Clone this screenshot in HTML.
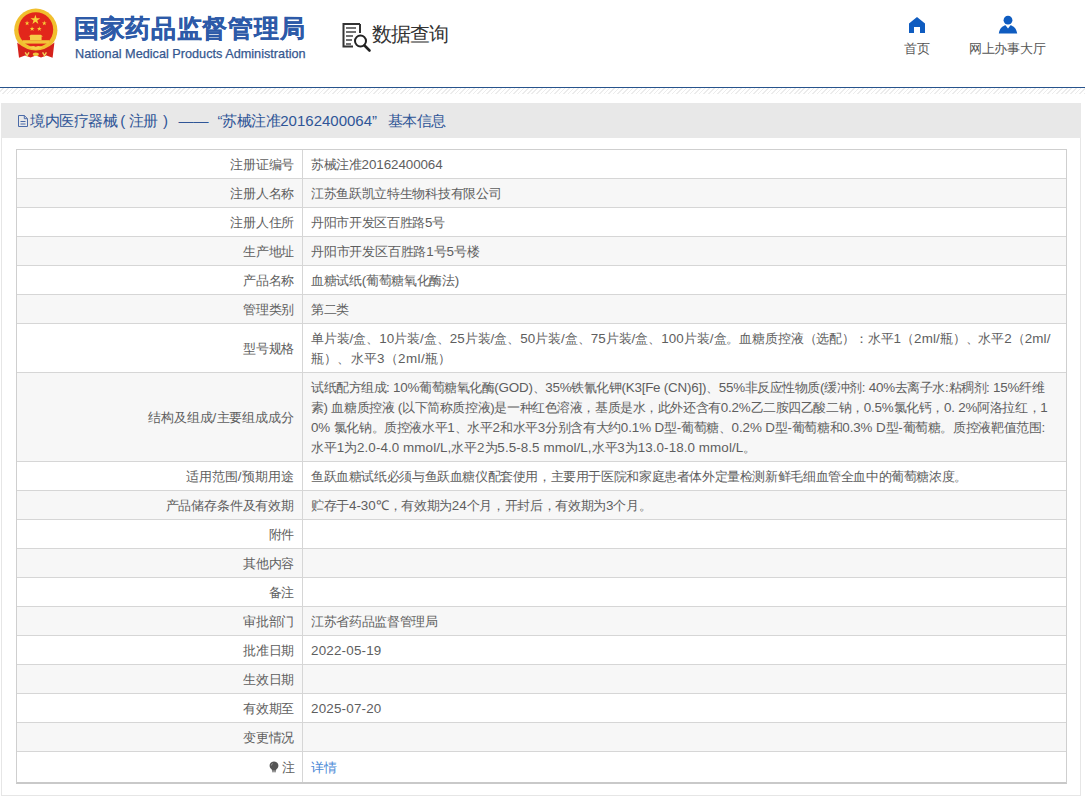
<!DOCTYPE html>
<html><head><meta charset="utf-8">
<style>
html,body{margin:0;padding:0;}
body{width:1085px;height:800px;overflow:hidden;background:#fff;position:relative;font-family:"Liberation Sans",sans-serif;}
.abs{position:absolute;}
#emblem{left:0;top:0;}
#t1{left:74px;top:10px;font-size:25px;font-weight:bold;color:#2d5aa8;-webkit-text-stroke:0.2px #2d5aa8;line-height:36px;white-space:nowrap;letter-spacing:0.7px;}
#t2{left:75px;top:45.5px;font-size:12.7px;color:#35578f;line-height:17px;white-space:nowrap;-webkit-text-stroke:0.25px #35578f;}
#sq{left:342px;top:23px;}
#sqt{left:372px;top:19px;font-size:20px;font-weight:500;color:#333;line-height:30px;white-space:nowrap;letter-spacing:-1px;}
.nav{font-size:13px;color:#555;line-height:16px;white-space:nowrap;}
#n1{left:904px;top:41px;letter-spacing:-0.3px;}
#n2{left:969px;top:41px;letter-spacing:-0.3px;}
#blue{left:0;top:87px;width:1085px;height:1px;background:#27538c;}
#hatch{left:0;top:88px;width:1085px;height:6px;background:repeating-linear-gradient(135deg,#fff 0px,#fff 2.1px,#ececec 2.1px,#ececec 3.2px);}
#panel{left:1px;top:103px;width:1078px;height:691px;border:1px solid #e6e6e6;background:#fff;}
#ph{left:1px;top:103px;width:1080px;height:35px;background:#e8e8e8;}
#pht{left:30px;top:103px;height:35px;line-height:35px;font-size:15px;color:#2f5597;white-space:nowrap;letter-spacing:-0.45px;}
#pht .l{font-size:15px;letter-spacing:0;}
#pht .dash{margin-left:11px;letter-spacing:0;}
#pht .q1{margin-left:9px;}
#pht .q2{margin-right:11px;}
#pht .p1{margin-left:3px;margin-right:4px;}
#pht .p2{margin-left:5px;}
#docic{left:17px;top:114px;}
#tbl{left:16px;top:149px;width:1049px;height:632px;border:1px solid #cfcfcf;border-bottom:2px solid #c9c9c9;}
.r{position:absolute;left:0;width:1049px;border-top:1px solid #d6d6d6;box-sizing:border-box;}
.r:first-child{border-top:none;}
.k{position:absolute;left:0;top:0;width:286px;height:100%;border-right:1px solid #d6d6d6;box-sizing:border-box;display:flex;align-items:center;justify-content:flex-end;padding-right:8px;padding-top:2px;font-size:13px;color:#5e5e5e;line-height:20px;white-space:nowrap;}
.kl,.ln{letter-spacing:-0.27px}
.v{position:absolute;left:294px;top:0;font-size:13px;color:#5e5e5e;line-height:20px;padding-top:5px;white-space:nowrap;}
.l{font-size:13.4px;letter-spacing:var(--lls,0px);}
.link{color:#4a88d6;padding-top:6px;}
.bulb{vertical-align:-1px;margin-right:3.5px;}
</style></head><body>
<svg id="emblem" class="abs" width="70" height="64" viewBox="0 0 70 64">
  <circle cx="35.8" cy="30.2" r="21.6" fill="#f1bf2e"/>
  <circle cx="35.8" cy="29.6" r="17.4" fill="#e2261b"/>
  <path d="M17.2 42.5 Q35.8 58.5 54.4 42.5 L52.6 57.8 L46.5 55.6 L41 57.4 L35.8 55.6 L30.6 57.4 L25.1 55.6 L19 57.8 Z" fill="#d5211b"/>
  <path d="M35.4 14.8l1.15 3.5h3.7l-3 2.2 1.15 3.5-3-2.2-3 2.2 1.15-3.5-3-2.2h3.7z" fill="#f8d23a"/>
  <path d="M27 20.6l.6 1.8h1.9l-1.5 1.1.6 1.8-1.5-1.1-1.5 1.1.6-1.8-1.5-1.1h1.9z" fill="#f8d23a"/>
  <path d="M44.2 20.6l.6 1.8h1.9l-1.5 1.1.6 1.8-1.5-1.1-1.5 1.1.6-1.8-1.5-1.1h1.9z" fill="#f8d23a"/>
  <path d="M32 26.2l.6 1.8h1.9l-1.5 1.1.6 1.8-1.5-1.1-1.5 1.1.6-1.8-1.5-1.1h1.9z" fill="#f8d23a"/>
  <path d="M39.2 26.2l.6 1.8h1.9l-1.5 1.1.6 1.8-1.5-1.1-1.5 1.1.6-1.8-1.5-1.1h1.9z" fill="#f8d23a"/>
  <path d="M28.6 36.4 L30.8 34.8 L40.8 34.8 L43 36.4 Z M30 36.4h11.6v3.8h-11.6z" fill="#f6cd48"/>
  <path d="M22.6 40.2h26.4v3.4h-26.4z" fill="#f3c43a"/>
  <path d="M29 47.6 Q32.5 45 35.8 46.8 Q39.1 45 42.6 47.6 Q39 49.6 35.8 49.4 Q32.6 49.6 29 47.6z" fill="#f6d04a"/>
  <path d="M25.2 52.4 L27.1 55.6 L29 52.4 M42.6 52.4 L44.5 55.6 L46.4 52.4" stroke="#f2cf5a" stroke-width="1.4" fill="none"/>
  <ellipse cx="35.8" cy="54.2" rx="3" ry="1.8" fill="#f2c640"/>
</svg>
<div id="t1" class="abs">国家药品监督管理局</div>
<div id="t2" class="abs">National Medical Products Administration</div>
<svg id="sq" class="abs" width="30" height="30" viewBox="0 0 30 30">
  <path d="M18 1H1.5v22.5H11" stroke="#333" stroke-width="2" fill="none"/>
  <path d="M18 1v9" stroke="#333" stroke-width="2" fill="none"/>
  <path d="M4 5h10M4 9h10M4 13h7M4 17h6M4 21h5" stroke="#444" stroke-width="1.5"/>
  <circle cx="18.5" cy="18" r="5.5" stroke="#222" stroke-width="2" fill="none"/>
  <path d="M22.5 22.5l5 5" stroke="#222" stroke-width="2.6" stroke-linecap="round"/>
</svg>
<div id="sqt" class="abs">数据查询</div>
<svg class="abs" style="left:908px;top:16px" width="18" height="18" viewBox="0 0 18 18">
  <path d="M9 1 L17 7.5 V17 H12 V11 H6 V17 H1 V7.5 Z" fill="#0f5cc0"/>
</svg>
<div id="n1" class="abs nav">首页</div>
<svg class="abs" style="left:998px;top:15px" width="20" height="20" viewBox="0 0 20 20">
  <circle cx="10" cy="5.2" r="4.4" fill="#0f5cc0"/>
  <path d="M0.8 18.5 C1.5 13.5 4.5 11 7.5 10.3 L10 13.5 L12.5 10.3 C15.5 11 18.5 13.5 19.2 18.5 Z" fill="#0f5cc0"/>
</svg>
<div id="n2" class="abs nav">网上办事大厅</div>
<div id="blue" class="abs"></div>
<div id="hatch" class="abs"></div>
<div id="panel" class="abs"></div>
<div id="ph" class="abs"></div>
<svg id="docic" class="abs" width="12" height="14" viewBox="0 0 12 14">
  <path d="M1.5 1.5H7.3L10.5 4.7V12.5H1.5Z" stroke="#4a6aa8" stroke-width="1" fill="none" stroke-linejoin="round"/>
  <path d="M7.3 1.5V4.7H10.5" stroke="#4a6aa8" stroke-width="1" fill="none"/>
  <path d="M3.5 7.5h5M3.5 10h5" stroke="#4a6aa8" stroke-width="1"/>
</svg>
<div id="pht" class="abs">境内医疗器械<span class="p1">(</span>注册<span class="p2">)</span><span class="dash">——</span><span class="q1">“</span>苏械注准<span class="l">20162400064</span><span class="q2">”</span>基本信息</div>
<div id="tbl" class="abs">
<div class="r" style="top:0px;height:28px;background:#fff"><div class="k"><span class="kl" id="k0">注册证编号</span></div><div class="v"><span class="ln" id="v0_0" style="letter-spacing:-0.355px;--lls:-0.085px">苏械注准<span class="l">20162400064</span></span></div></div>
<div class="r" style="top:28px;height:29px;background:#f7f7f7"><div class="k"><span class="kl" id="k1">注册人名称</span></div><div class="v"><span class="ln" id="v1_0" style="letter-spacing:-0.313px;--lls:-0.043px">江苏鱼跃凯立特生物科技有限公司</span></div></div>
<div class="r" style="top:57px;height:29px;background:#fff"><div class="k"><span class="kl" id="k2">注册人住所</span></div><div class="v"><span class="ln" id="v2_0" style="letter-spacing:-0.330px;--lls:-0.060px">丹阳市开发区百胜路<span class="l">5</span>号</span></div></div>
<div class="r" style="top:86px;height:29px;background:#f7f7f7"><div class="k"><span class="kl" id="k3">生产地址</span></div><div class="v"><span class="ln" id="v3_0" style="letter-spacing:-0.193px;--lls:0.077px">丹阳市开发区百胜路<span class="l">1</span>号<span class="l">5</span>号楼</span></div></div>
<div class="r" style="top:115px;height:29px;background:#fff"><div class="k"><span class="kl" id="k4">产品名称</span></div><div class="v"><span class="ln" id="v4_0" style="letter-spacing:-0.336px;--lls:-0.066px">血糖试纸<span class="l">(</span>葡萄糖氧化酶法<span class="l">)</span></span></div></div>
<div class="r" style="top:144px;height:29px;background:#f7f7f7"><div class="k"><span class="kl" id="k5">管理类别</span></div><div class="v"><span class="ln" id="v5_0">第二类</span></div></div>
<div class="r" style="top:173px;height:49px;background:#fff"><div class="k"><span class="kl" id="k6">型号规格</span></div><div class="v"><span class="ln" id="v6_0" style="letter-spacing:-0.138px;--lls:0.132px">单片装<span class="l">/</span>盒、<span class="l">10</span>片装<span class="l">/</span>盒、<span class="l">25</span>片装<span class="l">/</span>盒、<span class="l">50</span>片装<span class="l">/</span>盒、<span class="l">75</span>片装<span class="l">/</span>盒、<span class="l">100</span>片装<span class="l">/</span>盒。血糖质控液（选配）：水平<span class="l">1</span>（<span class="l">2ml/</span>瓶）、水平<span class="l">2</span>（<span class="l">2ml/</span></span><br><span class="ln" id="v6_1" style="letter-spacing:0.181px;--lls:0.451px">瓶）、水平<span class="l">3</span>（<span class="l">2ml/</span>瓶）</span></div></div>
<div class="r" style="top:222px;height:89px;background:#f7f7f7"><div class="k"><span class="kl" id="k7" style="letter-spacing:-0.088px;--lls:0.182px">结构及组成<span class="l">/</span>主要组成成分</span></div><div class="v"><span class="ln" id="v7_0" style="letter-spacing:-0.486px;--lls:-0.216px">试纸配方组成<span class="l">: 10%</span>葡萄糖氧化酶<span class="l">(GOD)</span>、<span class="l">35%</span>铁氰化钾<span class="l">(K3[Fe (CN)6])</span>、<span class="l">55%</span>非反应性物质<span class="l">(</span>缓冲剂<span class="l">: 40%</span>去离子水<span class="l">:</span>粘稠剂<span class="l">: 15%</span>纤维</span><br><span class="ln" id="v7_1" style="letter-spacing:-0.431px;--lls:-0.161px">素<span class="l">) </span>血糖质控液<span class="l"> (</span>以下简称质控液<span class="l">)</span>是一种红色溶液，基质是水，此外还含有<span class="l">0.2%</span>乙二胺四乙酸二钠，<span class="l">0.5%</span>氯化钙，<span class="l">0. 2%</span>阿洛拉红，<span class="l">1</span></span><br><span class="ln" id="v7_2" style="letter-spacing:-0.380px;--lls:-0.110px"><span class="l">0% </span>氯化钠。质控液水平<span class="l">1</span>、水平<span class="l">2</span>和水平<span class="l">3</span>分别含有大约<span class="l">0.1% D</span>型<span class="l">-</span>葡萄糖、<span class="l">0.2% D</span>型<span class="l">-</span>葡萄糖和<span class="l">0.3% D</span>型<span class="l">-</span>葡萄糖。质控液靶值范围<span class="l">:</span></span><br><span class="ln" id="v7_3" style="letter-spacing:-0.184px;--lls:0.086px">水平<span class="l">1</span>为<span class="l">2.0-4.0 mmol/L,</span>水平<span class="l">2</span>为<span class="l">5.5-8.5 mmol/L,</span>水平<span class="l">3</span>为<span class="l">13.0-18.0 mmol/L</span>。</span></div></div>
<div class="r" style="top:311px;height:29px;background:#fff"><div class="k"><span class="kl" id="k8" style="letter-spacing:0.030px;--lls:0.300px">适用范围<span class="l">/</span>预期用途</span></div><div class="v"><span class="ln" id="v8_0" style="letter-spacing:-0.387px;--lls:-0.117px">鱼跃血糖试纸必须与鱼跃血糖仪配套使用，主要用于医院和家庭患者体外定量检测新鲜毛细血管全血中的葡萄糖浓度。</span></div></div>
<div class="r" style="top:340px;height:29px;background:#f7f7f7"><div class="k"><span class="kl" id="k9" style="letter-spacing:-0.159px;--lls:0.111px">产品储存条件及有效期</span></div><div class="v"><span class="ln" id="v9_0" style="letter-spacing:-0.332px;--lls:-0.062px">贮存于<span class="l">4-30℃</span>，有效期为<span class="l">24</span>个月，开封后，有效期为<span class="l">3</span>个月。</span></div></div>
<div class="r" style="top:369px;height:29px;background:#fff"><div class="k"><span class="kl" id="k10">附件</span></div><div class="v"></div></div>
<div class="r" style="top:398px;height:29px;background:#f7f7f7"><div class="k"><span class="kl" id="k11">其他内容</span></div><div class="v"></div></div>
<div class="r" style="top:427px;height:29px;background:#fff"><div class="k"><span class="kl" id="k12">备注</span></div><div class="v"></div></div>
<div class="r" style="top:456px;height:29px;background:#f7f7f7"><div class="k"><span class="kl" id="k13">审批部门</span></div><div class="v"><span class="ln" id="v13_0" style="letter-spacing:-0.339px;--lls:-0.069px">江苏省药品监督管理局</span></div></div>
<div class="r" style="top:485px;height:29px;background:#fff"><div class="k"><span class="kl" id="k14">批准日期</span></div><div class="v"><span class="ln" id="v14_0" style="letter-spacing:-0.071px;--lls:0.199px"><span class="l">2022-05-19</span></span></div></div>
<div class="r" style="top:514px;height:29px;background:#f7f7f7"><div class="k"><span class="kl" id="k15">生效日期</span></div><div class="v"></div></div>
<div class="r" style="top:543px;height:29px;background:#fff"><div class="k"><span class="kl" id="k16">有效期至</span></div><div class="v"><span class="ln" id="v16_0" style="letter-spacing:-0.071px;--lls:0.199px"><span class="l">2025-07-20</span></span></div></div>
<div class="r" style="top:572px;height:29px;background:#f7f7f7"><div class="k"><span class="kl" id="k17">变更情况</span></div><div class="v"></div></div>
<div class="r" style="top:601px;height:31px;background:#fff"><div class="k"><span class="kl" id="k18" style="position:relative;left:1px"><svg class="bulb" width="10" height="12" viewBox="0 0 10 12"><path d="M5 0.5C2.3 0.5 0.6 2.4 0.6 4.7c0 1.6 0.9 2.6 1.7 3.4c0.5 0.5 0.7 1 0.7 1.6h4c0-0.6 0.2-1.1 0.7-1.6c0.8-0.8 1.7-1.8 1.7-3.4C9.4 2.4 7.7 0.5 5 0.5z" fill="#555"/><path d="M3 10.4h4v0.8h-4z" fill="#555"/><path d="M3.6 2.6c-0.7 0.4-1.1 1-1.2 1.8" stroke="#bbb" stroke-width="0.8" fill="none"/></svg>注</span></div><div class="v link">详情</div></div>
</div>
</body></html>
